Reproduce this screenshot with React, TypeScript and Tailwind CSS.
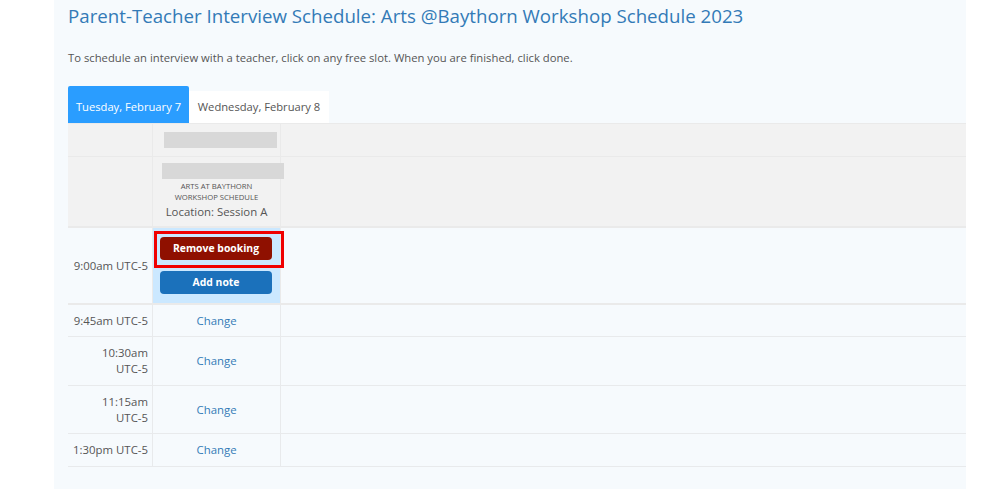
const slots = [
  { time: '9:45am UTC-5', height: 'h-[32px]' },
  { time: '10:30am UTC-5', height: 'h-[49px]' },
  { time: '11:15am UTC-5', height: 'h-[48px]' },
  { time: '1:30pm UTC-5', height: 'h-[33px]' },
]

export default function App() {
  return (
    <div className="h-[489px] overflow-hidden bg-white font-['Open_Sans',sans-serif] text-[11.4px] text-[#555]">
      <div className="ml-[54px] h-full w-[912px] bg-[#f6fafd]">
        <div className="pl-[14px]">
          {/* Heading */}
          <h1 className="pt-[3px] text-[18.7px] leading-[26px] font-normal text-[#337ab7]">
            Parent-Teacher Interview Schedule: Arts @Baythorn Workshop Schedule 2023
          </h1>
          <p className="mt-[20px] text-[11.27px] leading-[17px]">
            To schedule an interview with a teacher, click on any free slot. When you are finished, click done.
          </p>

          {/* Tabs */}
          <div className="mt-[19px] flex h-[38px] items-end">
            <div className="flex h-[37px] w-[121px] items-center justify-center rounded-t-[2px] bg-[#2a9dff] pt-[5px] text-[11.2px] text-white">
              Tuesday, February 7
            </div>
            <div className="flex h-[32px] w-[140px] items-center justify-center bg-white pt-[1px] text-[11.2px]">
              Wednesday, February 8
            </div>
          </div>

          {/* Schedule table */}
          <div className="grid grid-cols-[84px_128px_1fr]">
            <div className="h-[34px] border-y border-[#eaeaea] bg-[#f2f2f2]" />
            <div className="h-[34px] border-y border-l border-[#eaeaea] bg-[#f2f2f2] pt-[8px] pl-[11px]">
              <div className="h-[16px] w-[113px] bg-[#d8d8d8]" />
            </div>
            <div className="h-[34px] border-y border-l border-[#eaeaea] bg-[#f2f2f2]" />

            <div className="h-[71px] border-b-2 border-[#eaeaea] bg-[#f2f2f2]" />
            <div className="relative z-10 h-[71px] border-b-2 border-l border-[#eaeaea] bg-[#f2f2f2] pt-[6px] text-center">
              <div className="ml-[9px] h-[16px] w-[122px] bg-[#d8d8d8]" />
              <div className="mt-[2px] text-[7.7px] leading-[11px]">
                ARTS AT BAYTHORN
                <br />
                WORKSHOP SCHEDULE
              </div>
              <div className="leading-[17px]">Location: Session A</div>
            </div>
            <div className="h-[71px] border-b-2 border-l border-[#eaeaea] bg-[#f2f2f2]" />

            <div className="flex h-[77px] items-center justify-end border-b-2 border-[#eaeaea] pr-[4px]">
              9:00am UTC-5
            </div>
            <div className="relative z-10 flex h-[77px] flex-col items-start gap-[11px] border-b-2 border-l border-[#eaeaea] bg-[#cbe8ff] pt-[9px] pl-[7px]">
              <button className="h-[23px] w-[112px] rounded-[4px] bg-[#8f1000] text-[10.4px] font-bold text-white">
                Remove booking
              </button>
              <button className="h-[23px] w-[112px] rounded-[4px] bg-[#1b71bb] text-[10.4px] font-bold text-white">
                Add note
              </button>
              {/* Highlight around the remove button */}
              <div className="absolute top-[3px] left-[1px] h-[37px] w-[130px] border-[3px] border-[#f00000]" />
            </div>
            <div className="h-[77px] border-b-2 border-l border-[#eaeaea]" />

            {slots.map((slot) => (
              <div key={slot.time} className="contents">
                <div className={`flex items-center justify-end border-b border-[#e8eaec] pr-[4px] text-right leading-[16px] ${slot.height}`}>
                  <span className={slot.time.length > 12 ? 'w-[50px]' : ''}>{slot.time}</span>
                </div>
                <div className={`flex items-center justify-center border-b border-l border-[#e8eaec] text-[#337ab7] ${slot.height}`}>
                  Change
                </div>
                <div className={`border-b border-l border-[#e8eaec] ${slot.height}`} />
              </div>
            ))}
          </div>
        </div>
      </div>
    </div>
  )
}
